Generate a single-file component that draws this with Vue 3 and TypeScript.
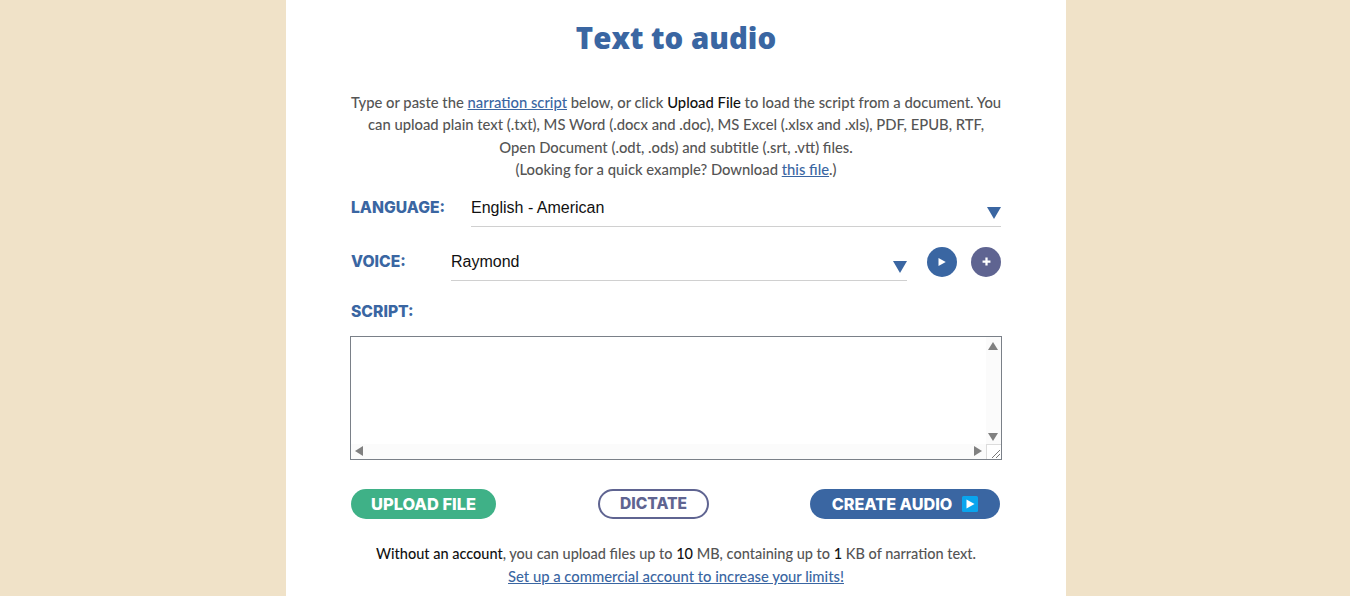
<script setup lang="ts">
const title: string = 'Text to audio'
</script>

<template>
  <main class="page">
    <section class="panel">
      <h1 class="title">{{ title }}</h1>
      <p class="intro">
        Type or paste the <a href="#">narration script</a> below, or click <b>Upload File</b> to load the script from a document. You<br />
        can upload plain text (.txt), MS Word (.docx and .doc), MS Excel (.xlsx and .xls), PDF, EPUB, RTF,<br />
        Open Document (.odt, .ods) and subtitle (.srt, .vtt) files.<br />
        (Looking for a quick example? Download <a href="#">this file</a>.)
      </p>

      <div class="row lang-row">
        <span class="label">LANGUAGE:</span>
        <div class="select lang-select"><span>English - American</span><i class="arrow"></i></div>
      </div>

      <div class="row voice-row">
        <span class="label">VOICE:</span>
        <div class="select voice-select"><span>Raymond</span><i class="arrow"></i></div>
        <button class="round play" aria-label="Play">
          <svg width="10" height="10" viewBox="0 0 8 8"><path d="M1.2 .8 7 4 1.2 7.2Z" fill="#fff" /></svg>
        </button>
        <button class="round plus" aria-label="Add">
          <svg width="9" height="9" viewBox="0 0 8 8"><path d="M4 .5v7M.5 4h7" stroke="#fff" stroke-width="2" fill="none" /></svg>
        </button>
      </div>

      <div class="label script-label">SCRIPT:</div>

      <div class="script-box">
        <div class="vbar">
          <svg class="sb top" width="10" height="8" viewBox="0 0 10 8"><path d="M5 0 10 8H0Z" /></svg>
          <svg class="sb bottom" width="10" height="8" viewBox="0 0 10 8"><path d="M5 8 0 0H10Z" /></svg>
        </div>
        <div class="hbar">
          <svg class="sb left" width="8" height="10" viewBox="0 0 8 10"><path d="M0 5 8 0V10Z" /></svg>
          <svg class="sb right" width="8" height="10" viewBox="0 0 8 10"><path d="M8 5 0 0V10Z" /></svg>
        </div>
        <div class="corner">
          <svg width="14" height="14" viewBox="0 0 14 14"><path d="M13 5 5 13M13 9 9 13" stroke="#777" stroke-width="1" fill="none" /></svg>
        </div>
      </div>

      <div class="actions">
        <button class="pill upload">UPLOAD FILE</button>
        <button class="pill dictate">DICTATE</button>
        <button class="pill create">
          CREATE AUDIO
          <svg class="create-icon" width="16" height="16" viewBox="0 0 16 16">
            <rect width="16" height="16" rx="1.5" fill="#0aa5ee" />
            <path d="M4.5 3.5 12.5 8 4.5 12.5Z" fill="#fff" />
          </svg>
        </button>
      </div>

      <p class="limits">
        <b>Without an account</b>, you can upload files up to <b>10</b> MB, containing up to <b>1</b> KB of narration text.<br />
        <a class="upsell" href="#">Set up a commercial account to increase your limits!</a>
      </p>
    </section>
  </main>
</template>

<style>
html, body { margin: 0; background: #f0e2c8; overflow: hidden; }
</style>

<style scoped>
.page {
  height: 596px;
  overflow: hidden;
  box-sizing: border-box;
  padding-left: 2px;
  display: flex;
  justify-content: center;
  background: #f0e2c8;
}
.panel {
  width: 650px;
  padding: 0 65px;
  background: #fff;
  font-family: Lato, "Open Sans", sans-serif;
  color: #555;
}
.title {
  margin: 0;
  padding-top: 20px;
  height: 37px;
  line-height: 37px;
  text-align: center;
  font-family: "Open Sans", Lato, sans-serif;
  font-size: 29.4px;
  font-weight: 800;
  color: #3a66a2;
}
.intro {
  margin: 34px 0 0;
  text-align: center;
  white-space: nowrap;
  font-size: 14.8px;
  line-height: 22.4px;
  font-weight: 500;
}
a { color: #3a66a2; text-decoration: underline; }
b { color: #111; font-weight: 500; }
.row { display: flex; align-items: flex-start; }
.label {
  font-family: Inter, "Open Sans", sans-serif;
  font-size: 15.7px;
  font-weight: 800;
  line-height: 20px;
  color: #3a66a2;
}
.lang-row { margin-top: 17px; }
.lang-row .label { width: 120px; }
.select {
  display: flex;
  justify-content: space-between;
  height: 29px;
  box-sizing: border-box;
  border-bottom: 1px solid #d0d0d0;
  font-family: "Liberation Sans", Arial, sans-serif;
  font-size: 16px;
  line-height: 20px;
  color: #111;
}
.lang-select { width: 530px; }
.voice-row { margin-top: 25px; }
.voice-row .label { width: 100px; }
.voice-select { width: 456px; }
.arrow {
  width: 0;
  height: 0;
  margin-top: 9px;
  border-left: 7.5px solid transparent;
  border-right: 7.5px solid transparent;
  border-top: 12px solid #3a66a2;
}
.round {
  width: 30px;
  height: 30px;
  padding: 0;
  border: 0;
  border-radius: 50%;
  display: flex;
  align-items: center;
  justify-content: center;
}
.play { margin-left: 20px; margin-top: -5px; background: #3a66a2; }
.plus { margin-left: 14px; margin-top: -5px; background: #5f6491; }
.script-label { margin-top: 21px; }
.script-box {
  position: relative;
  margin: 14px 0 0 -1px;
  width: 652px;
  height: 124px;
  box-sizing: border-box;
  border: 1px solid #7a8088;
  background: #fff;
}
.vbar {
  position: absolute;
  top: 0;
  right: 0;
  bottom: 15px;
  width: 15px;
  background: #fbfbfb;
}
.hbar {
  position: absolute;
  left: 0;
  right: 15px;
  bottom: 0;
  height: 15px;
  background: #fbfbfb;
}
.corner {
  position: absolute;
  right: 0;
  bottom: 0;
  width: 14px;
  height: 14px;
  border-left: 1px solid #dcdcdc;
  border-top: 1px solid #dcdcdc;
  background: #fff;
}
.corner svg { display: block; }
.sb { position: absolute; fill: #808080; }
.top { top: 5px; left: 2px; }
.bottom { bottom: 3px; left: 2px; }
.left { left: 4px; top: 2px; }
.right { right: 4px; top: 2px; }
.actions {
  margin: 29px 1px 0 0;
  display: flex;
  justify-content: space-between;
  align-items: center;
}
.pill {
  height: 30px;
  padding: 0;
  border: 0;
  border-radius: 15px;
  box-sizing: border-box;
  font-family: Inter, "Open Sans", sans-serif;
  font-size: 16.4px;
  font-weight: 800;
  display: flex;
  align-items: center;
  justify-content: center;
  color: #fff;
}
.upload { width: 145px; background: #3fb187; }
.dictate {
  width: 111px;
  margin-left: 1px;
  background: #fff;
  border: 2px solid #5f6491;
  color: #5f6491;
  font-size: 15.6px;
}
.create { width: 190px; background: #3a66a2; font-size: 16.2px; }
.create-icon { margin-left: 10px; }
.limits {
  margin: 23px 0 0;
  text-align: center;
  font-size: 14.5px;
  line-height: 23px;
  font-weight: 500;
}
.upsell { font-size: 14.8px; }
</style>
